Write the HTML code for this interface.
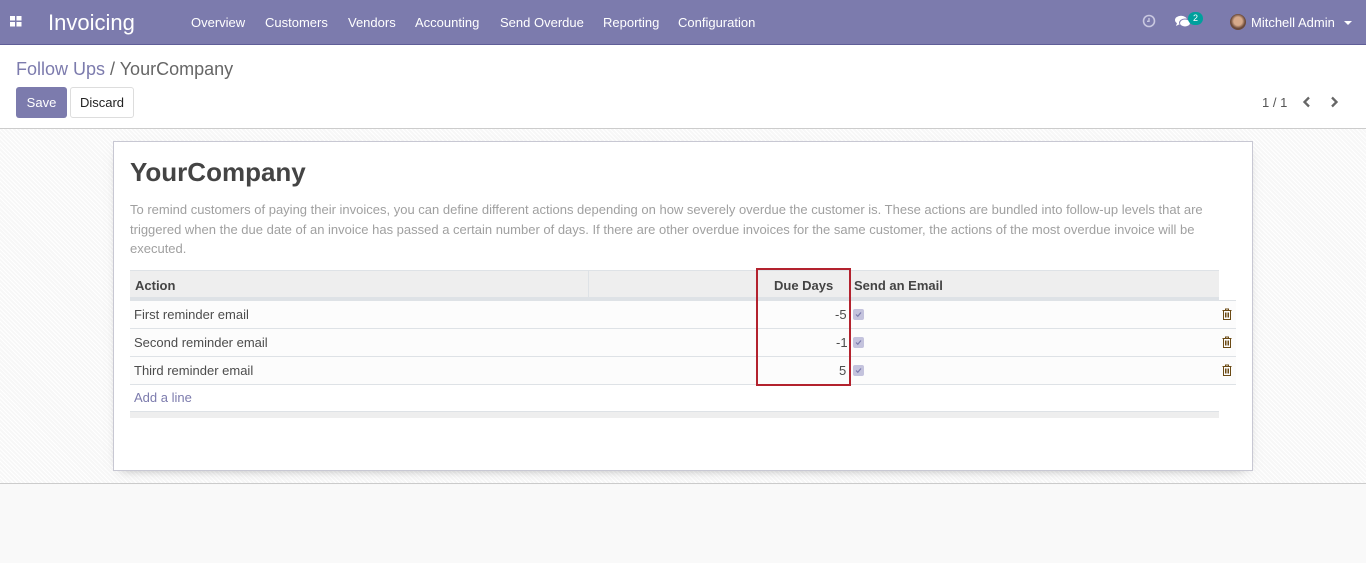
<!DOCTYPE html>
<html><head><meta charset="utf-8"><style>
*{box-sizing:border-box;margin:0;padding:0}
body{width:1366px;height:563px;overflow:hidden;font-family:"Liberation Sans",sans-serif;font-size:13px;color:#4c4c4c;background:#f9f9f9;position:relative}
.nav{position:absolute;left:0;top:0;width:1366px;height:45px;background:#7c7bad;border-bottom:1px solid #5f5e97;color:#fff}
.nav .t{position:absolute;top:1px;line-height:44px;font-size:13px;color:#fff}
.cp{position:absolute;left:0;top:45px;width:1366px;height:84px;background:#fff;border-bottom:1px solid #ccc}
.area{position:absolute;left:0;top:129px;width:1366px;height:355px;border-bottom:1px solid #ccc;background-color:#f7f7f7;background-image:repeating-linear-gradient(45deg,#fff 0 1px,transparent 1px 3px)}
.sheet{position:absolute;left:113px;top:141px;width:1140px;height:330px;background:#fff;border:1px solid #c8c8d3;box-shadow:0 4px 12px -8px rgba(0,0,0,.5)}
.a{position:absolute;white-space:nowrap}
.row{position:absolute;left:130px;width:1106px;height:28px;border-top:1px solid #dee2e6;background:#fcfcfc}
.cb{position:absolute;width:11px;height:11px;border-radius:2px;background:#c4c3dd}
.cb svg{position:absolute;left:2px;top:2px}
</style></head><body>
<div class="nav">
 <svg class="a" style="left:10px;top:16px" width="12" height="11"><rect x="0" y="0" width="5" height="4.5" fill="#fff"/><rect x="6.5" y="0" width="5" height="4.5" fill="#fff"/><rect x="0" y="6" width="5" height="4.5" fill="#fff"/><rect x="6.5" y="6" width="5" height="4.5" fill="#fff"/></svg>
 <div class="t" style="left:48px;font-size:22px">Invoicing</div>
 <div class="t" style="left:191px">Overview</div>
 <div class="t" style="left:265px">Customers</div>
 <div class="t" style="left:348px">Vendors</div>
 <div class="t" style="left:415px">Accounting</div>
 <div class="t" style="left:500px">Send Overdue</div>
 <div class="t" style="left:603px">Reporting</div>
 <div class="t" style="left:678px">Configuration</div>
 <svg class="a" style="left:1142px;top:14px" width="14" height="14"><circle cx="7" cy="7" r="5.5" fill="none" stroke="#c9c8e0" stroke-width="1.6"/><path d="M7 4v3.3h-2" stroke="#c9c8e0" stroke-width="1.4" fill="none"/></svg>
 <svg class="a" style="left:1175px;top:15px" width="16" height="14"><ellipse cx="6" cy="5" rx="6" ry="4.3" fill="#fff"/><ellipse cx="10" cy="8" rx="5.5" ry="4" fill="#fff" stroke="#7c7bad" stroke-width="1"/><path d="M2 8l-1 3 4-2z" fill="#fff"/></svg>
 <div class="a" style="left:1188px;top:12px;width:15px;height:13px;border-radius:7px;background:#00a09d;color:#fff;font-size:9px;line-height:13px;text-align:center">2</div>
 <div class="a" style="left:1230px;top:14px;width:16px;height:16px;border-radius:50%;background:radial-gradient(circle at 50% 45%,#d6a98a 0 35%,#6b4a3a 60%)"></div>
 <div class="t" style="left:1251px">Mitchell Admin</div>
 <div class="a" style="left:1344px;top:21px;border:4px solid transparent;border-top-color:#fff;border-bottom:0"></div>
</div>
<div class="cp">
 <div class="a" style="left:16px;top:14px;font-size:18px;color:#7c7bad">Follow Ups <span style="color:#666">/ YourCompany</span></div>
 <div class="a" style="left:16px;top:42px;width:51px;height:31px;background:#7c7bad;border-radius:3px;color:#fff;line-height:31px;text-align:center">Save</div>
 <div class="a" style="left:70px;top:42px;width:64px;height:31px;border:1px solid #ddd;border-radius:3px;color:#222;line-height:29px;text-align:center">Discard</div>
 <div class="a" style="left:1262px;top:50px;color:#555">1 / 1</div>
 <svg class="a" style="left:1302px;top:51px" width="10" height="12"><path d="M7 1.5L2.5 6 7 10.5" stroke="#666" stroke-width="2.3" fill="none"/></svg>
 <svg class="a" style="left:1329px;top:51px" width="10" height="12"><path d="M3 1.5L7.5 6 3 10.5" stroke="#666" stroke-width="2.3" fill="none"/></svg>
</div>
<div class="area"></div>
<div class="sheet"></div>
<div class="a" style="left:130px;top:157px;font-size:26px;font-weight:bold;color:#444">YourCompany</div>
<div class="a" style="left:130px;top:200px;width:1090px;white-space:normal;line-height:19.5px;color:#a0a0a0">To remind customers of paying their invoices, you can define different actions depending on how severely overdue the customer is. These actions are bundled into follow-up levels that are triggered when the due date of an invoice has passed a certain number of days. If there are other overdue invoices for the same customer, the actions of the most overdue invoice will be executed.</div>
<div class="a" style="left:130px;top:270px;width:1089px;height:30px;background:#eee;border-top:1px solid #dee2e6;border-bottom:3px solid #dee2e6"></div>
<div class="a" style="left:588px;top:271px;width:1px;height:26px;background:#dee2e6"></div>
<div class="a" style="left:135px;top:278px;font-weight:bold;color:#444">Action</div>
<div class="a" style="left:774px;top:278px;font-weight:bold;color:#444">Due Days</div>
<div class="a" style="left:854px;top:278px;font-weight:bold;color:#444">Send an Email</div>
<div class="row" style="top:300px"></div>
<div class="row" style="top:328px"></div>
<div class="row" style="top:356px;border-bottom:1px solid #dee2e6;height:29px"></div>
<div class="a" style="left:134px;top:307px">First reminder email</div>
<div class="a" style="left:134px;top:335px">Second reminder email</div>
<div class="a" style="left:134px;top:363px">Third reminder email</div>
<div class="a" style="left:835px;top:307px">-5</div>
<div class="a" style="left:836px;top:335px">-1</div>
<div class="a" style="left:839px;top:363px">5</div>
<div class="cb" style="left:853px;top:309px"><svg width="7" height="7"><path d="M1 3.5l1.8 1.8L6 1.5" stroke="#7c7bad" stroke-width="1.2" fill="none"/></svg></div>
<div class="cb" style="left:853px;top:337px"><svg width="7" height="7"><path d="M1 3.5l1.8 1.8L6 1.5" stroke="#7c7bad" stroke-width="1.2" fill="none"/></svg></div>
<div class="cb" style="left:853px;top:365px"><svg width="7" height="7"><path d="M1 3.5l1.8 1.8L6 1.5" stroke="#7c7bad" stroke-width="1.2" fill="none"/></svg></div>
<svg class="a" style="left:1222px;top:308px" width="10" height="12"><path d="M0.5 2.5h9M3.5 2.5V1h3v1.5M1.5 2.5v9h7v-9M3.5 4.5v5M5 4.5v5M6.5 4.5v5" stroke="#6b4a14" stroke-width="1" fill="none"/></svg>
<svg class="a" style="left:1222px;top:336px" width="10" height="12"><path d="M0.5 2.5h9M3.5 2.5V1h3v1.5M1.5 2.5v9h7v-9M3.5 4.5v5M5 4.5v5M6.5 4.5v5" stroke="#6b4a14" stroke-width="1" fill="none"/></svg>
<svg class="a" style="left:1222px;top:364px" width="10" height="12"><path d="M0.5 2.5h9M3.5 2.5V1h3v1.5M1.5 2.5v9h7v-9M3.5 4.5v5M5 4.5v5M6.5 4.5v5" stroke="#6b4a14" stroke-width="1" fill="none"/></svg>
<div class="a" style="left:134px;top:390px;color:#7c7bad">Add a line</div>
<div class="a" style="left:130px;top:411px;width:1089px;height:7px;background:#eee;border-top:1px solid #dee2e6"></div>
<div class="a" style="left:756px;top:268px;width:95px;height:118px;border:2px solid #b3222e"></div>
</body></html>
